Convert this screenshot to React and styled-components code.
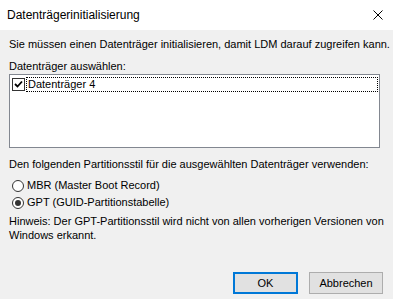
import React from "react";
import styled, { createGlobalStyle } from "styled-components";

const Global = createGlobalStyle`
  html, body { margin: 0; padding: 0; background: #f0f0f0; }
  body { width: 393px; height: 299px; overflow: hidden; }
`;

const Window = styled.div`
  width: 393px;
  height: 299px;
  display: flex;
  flex-direction: column;
  background: #f0f0f0;
  font-family: "Liberation Sans", Arial, sans-serif;
  font-size: 11px;
  color: #000;
`;

const TitleBar = styled.div`
  height: 30px;
  background: #fff;
  display: flex;
  align-items: center;
  justify-content: space-between;
  padding-left: 7px;
  box-sizing: border-box;
`;

const Title = styled.span`
  font-size: 12px;
  line-height: 14px;
`;

const Close = styled.div`
  width: 46px;
  height: 30px;
  display: flex;
  align-items: center;
  justify-content: center;
  padding-left: 16px;
  box-sizing: border-box;
`;

const Body = styled.div`
  flex: 1;
  display: flex;
  flex-direction: column;
  padding: 8px 10px 0 9px;
`;

const Text = styled.div`
  line-height: 13px;
  margin-top: ${(p) => p.$mt || 0}px;
  white-space: nowrap;
`;

const ListBox = styled.div`
  margin: 1px 3px 0 0;
  height: 74px;
  box-sizing: border-box;
  border: 1px solid #828790;
  background: #fff;
  padding: 2px 1px 0 2px;
`;

const Item = styled.div`
  display: flex;
  align-items: center;
  height: 15px;
`;

const CheckBox = styled.div`
  width: 13px;
  height: 13px;
  box-sizing: border-box;
  border: 1px solid #333;
  background: #fff;
  display: flex;
  align-items: center;
  justify-content: center;
  margin-right: 1px;
`;

const ItemLabel = styled.div`
  flex: 1;
  height: 15px;
  box-sizing: border-box;
  border: 1px dotted #000;
  line-height: 13px;
  padding-left: 1px;
`;

const RadioRow = styled.div`
  display: flex;
  align-items: center;
  height: 17px;
  margin-top: ${(p) => p.$mt || 0}px;
  padding-left: 3px;
`;

const Radio = styled.div`
  width: 12px;
  height: 12px;
  box-sizing: border-box;
  border: 1px solid #333;
  border-radius: 50%;
  background: #fff;
  margin-right: 3px;
  display: flex;
  align-items: center;
  justify-content: center;
  &::after {
    content: "";
    display: ${(p) => (p.$checked ? "block" : "none")};
    width: 6px;
    height: 6px;
    border-radius: 50%;
    background: #333;
  }
`;

const RadioLabel = styled.span`
  line-height: 13px;
`;

const Footer = styled.div`
  margin-top: auto;
  display: flex;
  justify-content: flex-end;
  gap: 11px;
  padding: 0 0 5px 0;
`;

const Button = styled.button`
  font-family: "Liberation Sans", Arial, sans-serif;
  font-size: 11px;
  width: ${(p) => (p.$primary ? 65 : 74)}px;
  height: 22px;
  box-sizing: border-box;
  background: #e1e1e1;
  border: ${(p) => (p.$primary ? "2px solid #0078d7" : "1px solid #adadad")};
  padding: 0;
  color: #000;
  margin: 0;
`;

export default function App() {
  return (
    <>
      <Global />
      <Window>
        <TitleBar>
          <Title>Datenträgerinitialisierung</Title>
          <Close>
            <svg width="10" height="10" viewBox="0 0 10 10">
              <path d="M0.5 0.5 L9.5 9.5 M9.5 0.5 L0.5 9.5" stroke="#000" strokeWidth="1" fill="none" />
            </svg>
          </Close>
        </TitleBar>
        <Body>
          <Text>Sie müssen einen Datenträger initialisieren, damit LDM darauf zugreifen kann.</Text>
          <Text $mt={9}>Datenträger auswählen:</Text>
          <ListBox>
            <Item>
              <CheckBox>
                <svg width="9" height="9" viewBox="0 0 9 9">
                  <path d="M1 4 L3.5 6.5 L8 1.5" stroke="#000" strokeWidth="1.8" fill="none" />
                </svg>
              </CheckBox>
              <ItemLabel>Datenträger 4</ItemLabel>
            </Item>
          </ListBox>
          <Text $mt={10}>Den folgenden Partitionsstil für die ausgewählten Datenträger verwenden:</Text>
          <RadioRow $mt={6}>
            <Radio />
            <RadioLabel>MBR (Master Boot Record)</RadioLabel>
          </RadioRow>
          <RadioRow>
            <Radio $checked />
            <RadioLabel>GPT (GUID-Partitionstabelle)</RadioLabel>
          </RadioRow>
          <Text $mt={4}>Hinweis: Der GPT-Partitionsstil wird nicht von allen vorherigen Versionen von</Text>
          <Text $mt={1}>Windows erkannt.</Text>
          <Footer>
            <Button $primary>OK</Button>
            <Button>Abbrechen</Button>
          </Footer>
        </Body>
      </Window>
    </>
  );
}
